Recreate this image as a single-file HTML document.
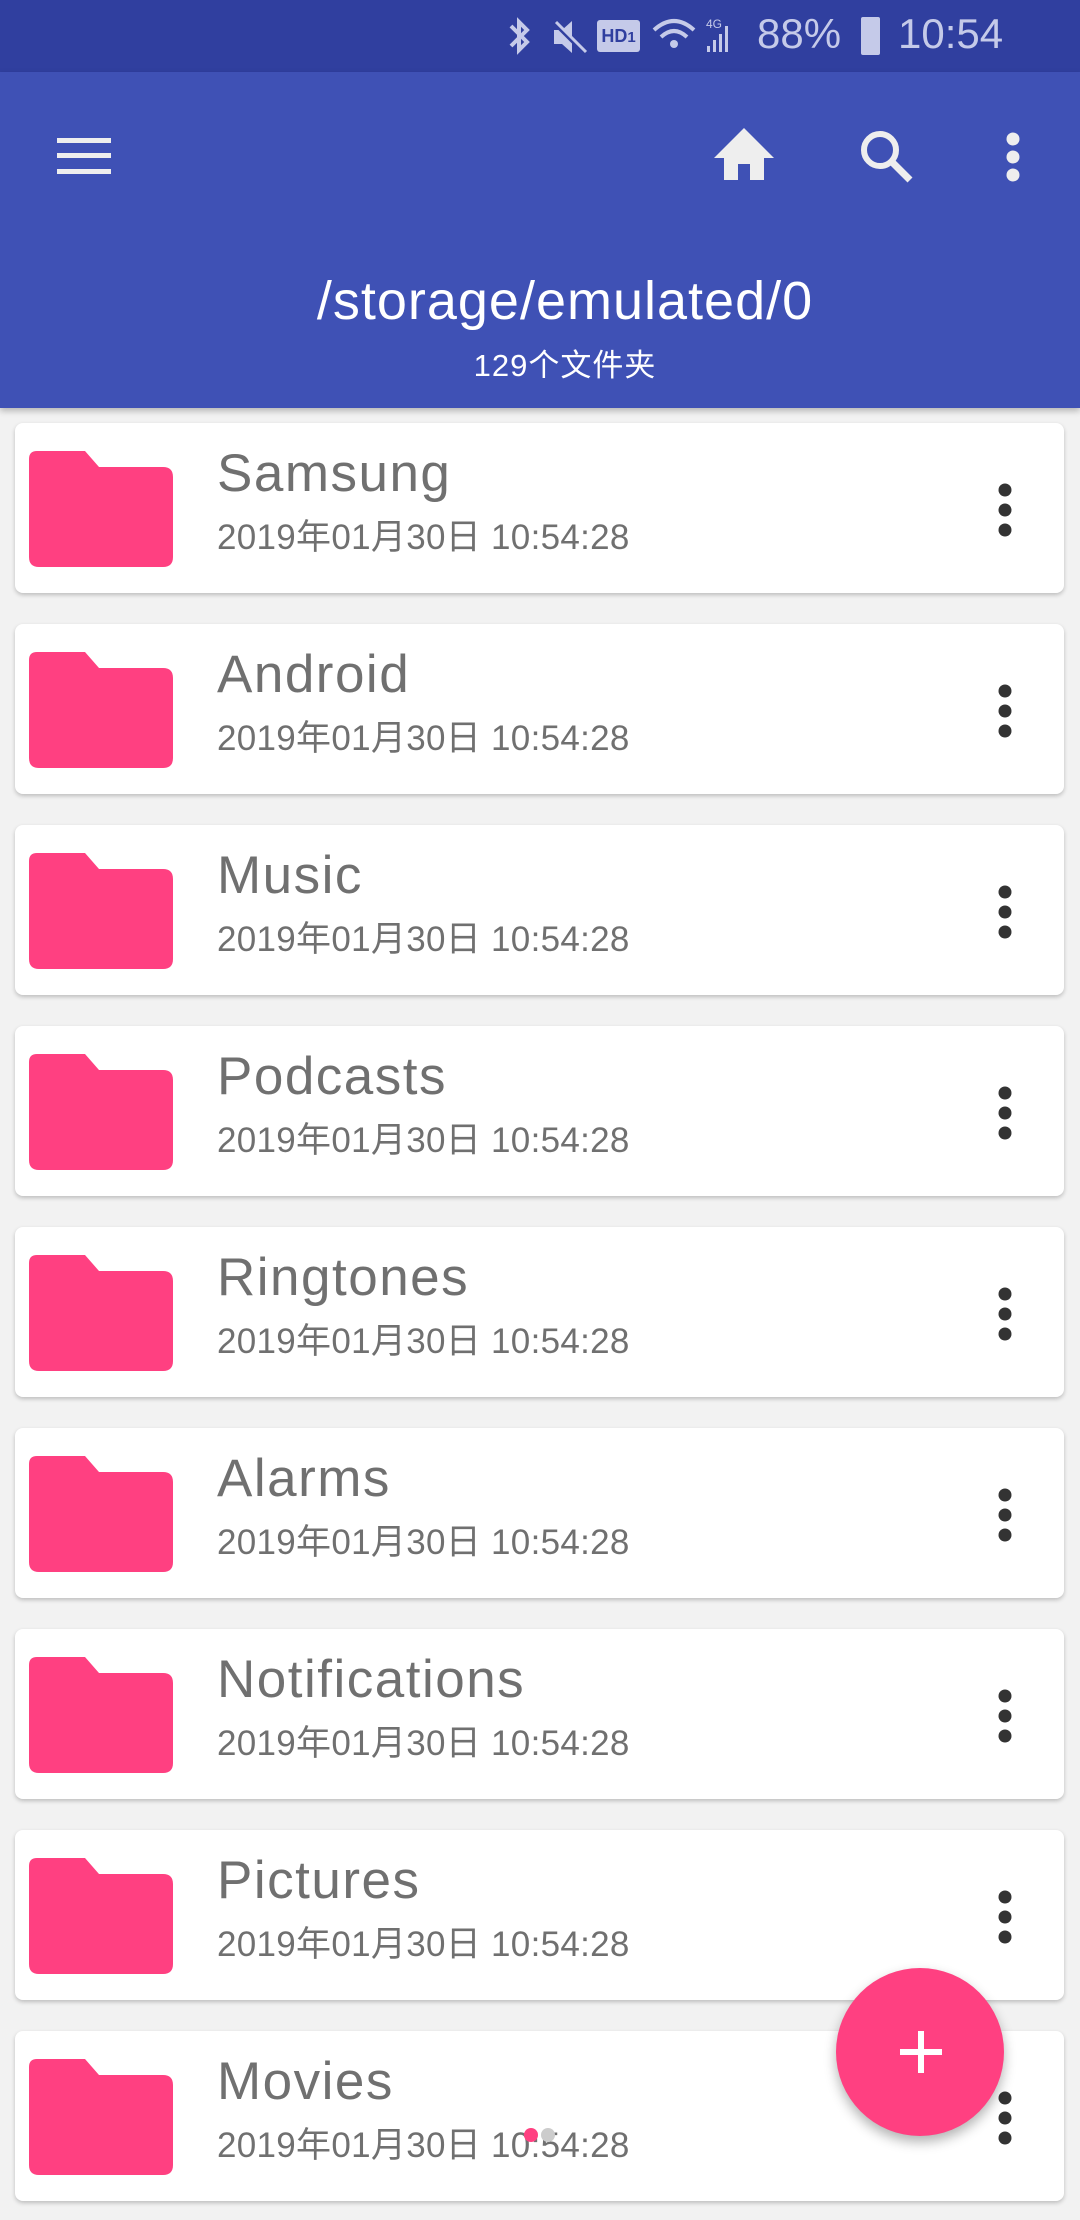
<!DOCTYPE html>
<html><head><meta charset="utf-8"><style>
*{margin:0;padding:0;box-sizing:border-box}
body{width:1080px;height:2220px;background:#f2f2f2;font-family:"Liberation Sans","Noto Sans CJK SC",sans-serif;position:relative;overflow:hidden}
.sb{position:absolute;left:0;top:0;width:1080px;height:72px;background:#303f9f;color:#c5cae9}
.tb{position:absolute;left:0;top:72px;width:1080px;height:336px;background:#3f51b5;box-shadow:0 3px 6px rgba(0,0,0,.25)}
.card{position:absolute;left:15px;width:1049px;height:170px;background:#fff;border-radius:8px;box-shadow:0 2px 4px rgba(0,0,0,.22)}
.fold{position:absolute;left:14px;top:28px}
.t{position:absolute;left:202px;top:20px;font-size:53px;letter-spacing:1.5px;color:#707070}
.d{position:absolute;left:202px;top:86px;font-size:35px;letter-spacing:.3px;color:#707070}
.k{position:absolute;left:980px;top:60px}
</style></head><body>
<div class="sb">
<svg style="position:absolute;left:505px;top:16px" width="30" height="40" viewBox="0 0 30 40"><path d="M6 10 L22 26 L14 34 L14 6 L22 14 L6 30" fill="none" stroke="#c5cae9" stroke-width="4"/></svg>
<svg style="position:absolute;left:550px;top:18px" width="40" height="38" viewBox="0 0 40 38"><path d="M4 12h8l10-9v32l-10-9H4z" fill="#c5cae9"/><path d="M4 4L34 34" stroke="#303f9f" stroke-width="5"/><path d="M6 4L36 34" stroke="#c5cae9" stroke-width="3"/></svg>
<div style="position:absolute;left:597px;top:20px;width:43px;height:32px;background:#c5cae9;border-radius:3px;color:#303f9f;font-size:18px;font-weight:bold;text-align:center;line-height:32px">HD<small>1</small></div>
<svg style="position:absolute;left:652px;top:16px" width="90" height="40" viewBox="0 0 90 40"><path d="M2 14 Q22 -4 42 14" fill="none" stroke="#c5cae9" stroke-width="4"/><path d="M9 21 Q22 9 35 21" fill="none" stroke="#c5cae9" stroke-width="4"/><circle cx="22" cy="28" r="4" fill="#c5cae9"/><path d="M55 36h3v-6h-3zM61 36h3v-12h-3zM67 36h3v-18h-3zM73 36h3v-26h-3z" fill="#c5cae9"/><text x="54" y="12" font-size="12" fill="#c5cae9" font-family="Liberation Sans">4G</text></svg>
<div style="position:absolute;left:757px;top:10px;font-size:42px">88%</div>
<div style="position:absolute;left:861px;top:17px;width:19px;height:38px;background:#c5cae9;border-radius:2px"></div>
<div style="position:absolute;left:898px;top:10px;font-size:42px">10:54</div>
</div>
<div class="tb">
<div style="position:absolute;left:57px;top:66px;width:54px;height:5px;background:#eee;box-shadow:0 15px 0 #eee,0 31px 0 #eee"></div>
<svg style="position:absolute;left:712px;top:56px" width="64" height="52" viewBox="0 0 64 52"><path d="M32 0 L62 30 H52 V52 H38 V36 H26 V52 H12 V30 H2 Z" fill="#eee"/></svg>
<svg style="position:absolute;left:858px;top:56px" width="58" height="56" viewBox="0 0 58 56"><circle cx="22" cy="22" r="16" fill="none" stroke="#eee" stroke-width="6"/><path d="M33 33 L52 52" stroke="#eee" stroke-width="7"/></svg>
<svg style="position:absolute;left:1001px;top:58px" width="24" height="54"><circle cx="12" cy="9" r="6.5" fill="#eee"/><circle cx="12" cy="27" r="6.5" fill="#eee"/><circle cx="12" cy="45" r="6.5" fill="#eee"/></svg>
<div style="position:absolute;left:0;width:1080px;top:198px;text-align:center;color:#fff;font-size:54px;letter-spacing:1px;padding-left:50px">/storage/emulated/0</div>
<div style="position:absolute;left:0;width:1080px;top:268px;text-align:center;color:#fff;font-size:31px;letter-spacing:1px;padding-left:50px">129个文件夹</div>
</div>
<div class="card" style="top:423px"><svg class="fold" width="144" height="116" viewBox="0 0 144 116"><path d="M8 0H56L70 16H134Q144 16 144 26V106Q144 116 134 116H10Q0 116 0 106V8Q0 0 8 0Z" fill="#ff4081"/></svg><div class="t">Samsung</div><div class="d">2019年01月30日 10:54:28</div><svg class="k" width="20" height="54"><circle cx="10" cy="7" r="6.5" fill="#333"/><circle cx="10" cy="27" r="6.5" fill="#333"/><circle cx="10" cy="47" r="6.5" fill="#333"/></svg></div>
<div class="card" style="top:624px"><svg class="fold" width="144" height="116" viewBox="0 0 144 116"><path d="M8 0H56L70 16H134Q144 16 144 26V106Q144 116 134 116H10Q0 116 0 106V8Q0 0 8 0Z" fill="#ff4081"/></svg><div class="t">Android</div><div class="d">2019年01月30日 10:54:28</div><svg class="k" width="20" height="54"><circle cx="10" cy="7" r="6.5" fill="#333"/><circle cx="10" cy="27" r="6.5" fill="#333"/><circle cx="10" cy="47" r="6.5" fill="#333"/></svg></div>
<div class="card" style="top:825px"><svg class="fold" width="144" height="116" viewBox="0 0 144 116"><path d="M8 0H56L70 16H134Q144 16 144 26V106Q144 116 134 116H10Q0 116 0 106V8Q0 0 8 0Z" fill="#ff4081"/></svg><div class="t">Music</div><div class="d">2019年01月30日 10:54:28</div><svg class="k" width="20" height="54"><circle cx="10" cy="7" r="6.5" fill="#333"/><circle cx="10" cy="27" r="6.5" fill="#333"/><circle cx="10" cy="47" r="6.5" fill="#333"/></svg></div>
<div class="card" style="top:1026px"><svg class="fold" width="144" height="116" viewBox="0 0 144 116"><path d="M8 0H56L70 16H134Q144 16 144 26V106Q144 116 134 116H10Q0 116 0 106V8Q0 0 8 0Z" fill="#ff4081"/></svg><div class="t">Podcasts</div><div class="d">2019年01月30日 10:54:28</div><svg class="k" width="20" height="54"><circle cx="10" cy="7" r="6.5" fill="#333"/><circle cx="10" cy="27" r="6.5" fill="#333"/><circle cx="10" cy="47" r="6.5" fill="#333"/></svg></div>
<div class="card" style="top:1227px"><svg class="fold" width="144" height="116" viewBox="0 0 144 116"><path d="M8 0H56L70 16H134Q144 16 144 26V106Q144 116 134 116H10Q0 116 0 106V8Q0 0 8 0Z" fill="#ff4081"/></svg><div class="t">Ringtones</div><div class="d">2019年01月30日 10:54:28</div><svg class="k" width="20" height="54"><circle cx="10" cy="7" r="6.5" fill="#333"/><circle cx="10" cy="27" r="6.5" fill="#333"/><circle cx="10" cy="47" r="6.5" fill="#333"/></svg></div>
<div class="card" style="top:1428px"><svg class="fold" width="144" height="116" viewBox="0 0 144 116"><path d="M8 0H56L70 16H134Q144 16 144 26V106Q144 116 134 116H10Q0 116 0 106V8Q0 0 8 0Z" fill="#ff4081"/></svg><div class="t">Alarms</div><div class="d">2019年01月30日 10:54:28</div><svg class="k" width="20" height="54"><circle cx="10" cy="7" r="6.5" fill="#333"/><circle cx="10" cy="27" r="6.5" fill="#333"/><circle cx="10" cy="47" r="6.5" fill="#333"/></svg></div>
<div class="card" style="top:1629px"><svg class="fold" width="144" height="116" viewBox="0 0 144 116"><path d="M8 0H56L70 16H134Q144 16 144 26V106Q144 116 134 116H10Q0 116 0 106V8Q0 0 8 0Z" fill="#ff4081"/></svg><div class="t">Notifications</div><div class="d">2019年01月30日 10:54:28</div><svg class="k" width="20" height="54"><circle cx="10" cy="7" r="6.5" fill="#333"/><circle cx="10" cy="27" r="6.5" fill="#333"/><circle cx="10" cy="47" r="6.5" fill="#333"/></svg></div>
<div class="card" style="top:1830px"><svg class="fold" width="144" height="116" viewBox="0 0 144 116"><path d="M8 0H56L70 16H134Q144 16 144 26V106Q144 116 134 116H10Q0 116 0 106V8Q0 0 8 0Z" fill="#ff4081"/></svg><div class="t">Pictures</div><div class="d">2019年01月30日 10:54:28</div><svg class="k" width="20" height="54"><circle cx="10" cy="7" r="6.5" fill="#333"/><circle cx="10" cy="27" r="6.5" fill="#333"/><circle cx="10" cy="47" r="6.5" fill="#333"/></svg></div>
<div class="card" style="top:2031px"><svg class="fold" width="144" height="116" viewBox="0 0 144 116"><path d="M8 0H56L70 16H134Q144 16 144 26V106Q144 116 134 116H10Q0 116 0 106V8Q0 0 8 0Z" fill="#ff4081"/></svg><div class="t">Movies</div><div class="d">2019年01月30日 10:54:28</div><svg class="k" width="20" height="54"><circle cx="10" cy="7" r="6.5" fill="#333"/><circle cx="10" cy="27" r="6.5" fill="#333"/><circle cx="10" cy="47" r="6.5" fill="#333"/></svg></div>
<div style="position:absolute;left:524px;top:2128px;width:14px;height:14px;border-radius:50%;background:#ff4081"></div>
<div style="position:absolute;left:541px;top:2128px;width:14px;height:14px;border-radius:50%;background:#ccc"></div>
<div style="position:absolute;left:836px;top:1968px;width:168px;height:168px;border-radius:50%;background:#ff4081;box-shadow:0 6px 12px rgba(0,0,0,.3)">
<div style="position:absolute;left:64px;top:81px;width:42px;height:6px;background:#fff"></div>
<div style="position:absolute;left:82px;top:63px;width:6px;height:42px;background:#fff"></div>
</div>
</body></html>
